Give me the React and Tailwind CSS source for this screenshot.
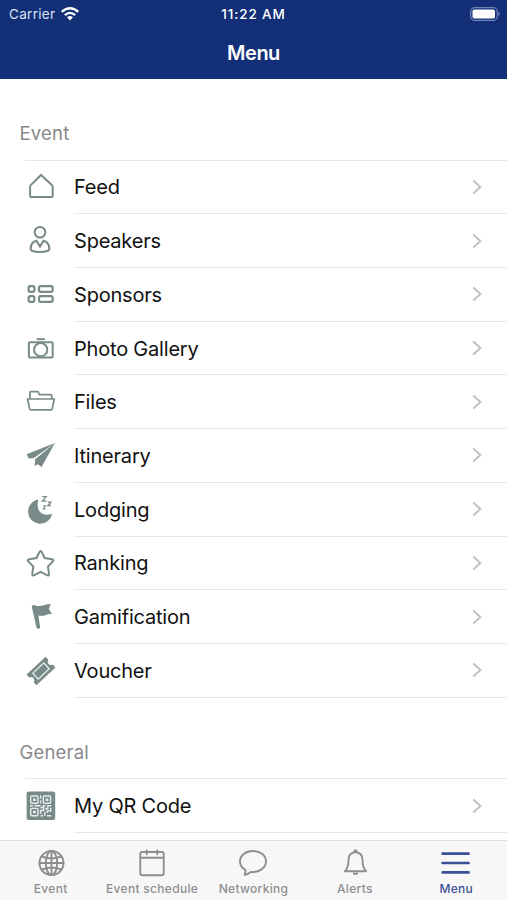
import React, { useState } from "react";

const HouseIcon = () => (
  <path
    d="M17 4 7 13.900c-.600.600-.900 1-.900 1.900V24.900a1.200 1.200 0 0 0 1.200 1.200h20.200a1.200 1.200 0 0 0 1.200-1.200v-9.100c0-.900-.300-1.300-.900-1.900Z"
    fill="none"
  />
);

const PersonIcon = () => (
  <g fill="none">
    <circle cx="16" cy="7.200" r="5.300" />
    <path d="M12.400 15.800C8.500 17 6.600 20.200 6.600 24c0 1.900 4.600 3 9.300 3s9.500-1.100 9.500-3c0-3.800-1.900-7-5.900-8.200L16 21.500Z" />
  </g>
);

const SponsorsIcon = () => (
  <g fill="none" strokeWidth="2.200">
    <rect x="4.600" y="7.200" width="5.800" height="5.600" rx="1.800" />
    <rect x="15" y="7.200" width="13.700" height="5.600" rx="1.800" />
    <rect x="4.600" y="17.100" width="5.800" height="5.800" rx="1.800" />
    <rect x="15" y="17.100" width="13.700" height="5.800" rx="1.800" />
  </g>
);

const CameraIcon = () => (
  <g fill="none">
    <rect x="4.900" y="9.200" width="23.800" height="15.200" rx="1" />
    <circle cx="16.700" cy="16.700" r="6.600" />
    <path d="M12.700 6.200h8.300" />
  </g>
);

const FolderIcon = () => (
  <g fill="none" strokeWidth="1.700">
    <path d="M6 13V6.500q0-.800.800-.800h6.600q.700 0 1.100.800l.900 2.200H26.800q1 0 1 1V13" />
    <path d="M3.600 13h26.600l-1.900 9.700q-.200 1.200-1.400 1.200H7q-1.200 0-1.400-1.200Z" />
  </g>
);

const PlaneIcon = () => (
  <g stroke="none">
    <path d="M30.900 3.100 2.600 14.300l2.100 4.300 5.200-.700Z" />
    <path d="m30.900 3.100-19.700 16.100-.7 7 3.200-2 3.900 2.700Z" />
  </g>
);

const MoonIcon = () => (
  <g>
    <path
      stroke="none"
      d="M14.500 5.600A12.100 12.100 0 1 0 28.200 19.400C22.500 22.500 14.600 20 13.800 13c-.300-3 .0-5.300.7-7.400Z"
    />
    <g fill="none" strokeWidth="1.300">
      <path d="M18.200 2.600h4l-3.900 4.600h4.200" />
      <path d="M23.800 8.200h3l-2.900 3.300h3.100" />
      <path d="M19.300 11.700h2.100l-2.100 3.200h2.100" strokeWidth="1.100" />
    </g>
  </g>
);

const StarIcon = () => (
  <path
    fill="none"
    d="M15.300 5.200q1.300-2.200 2.600 0l2.800 5.800 7.200 1.200q2.500.500 1 2.200l-5 5.200 1.100 7q.2 2.700-2 1.600l-6.400-3.300-6.300 3.300q-2.300 1.100-2-1.400l1-7.200-5-5.200q-1.600-1.800.9-2.200l7.300-1.200Z"
  />
);

const FlagIcon = () => (
  <path
    stroke="none"
    d="M7.700 5.500q0-1 1-1.200l1.900-.3 1 .8q5.500.800 9-.900 2.700-.900 6.200-.900l-2 5 3.200 5q-3-.400-6 .900-3.400 1.300-7.600.7l1.700 11.700q.2 1.400-1.600 1.500-1.700 0-2-1.300Z"
  />
);

const TicketIcon = () => (
  <g transform="translate(17 16) rotate(-43)">
    <path
      stroke="none"
      d="M-13-7.200H13v3.900a3.400 3.400 0 0 0 0 6.600v3.900H-13V3.300a3.400 3.400 0 0 0 0-6.600Z"
    />
    <rect x="-7.500" y="-4" width="15" height="8" fill="none" stroke="#eef3f2" strokeWidth="1.200" />
  </g>
);

const QrIcon = () => (
  <g>
    <rect x="2.600" y="1.400" width="28.600" height="28.600" rx="2" stroke="none" />
    <g fill="none" stroke="#e6eceb" strokeWidth="1.400">
      <rect x="6.700" y="6" width="7.300" height="7.300" rx="1.200" />
      <rect x="19.300" y="6" width="7.300" height="7.300" rx="1.200" />
      <rect x="6.700" y="18.400" width="7.300" height="7.300" rx="1.200" />
      <path d="M9 9.700h2.800M21.600 9.700h2.800M9 22h2.800" strokeWidth="2.400" />
      <path d="M16.600 5.300v3.500M16.600 10.500v3M6 15.800h3M10.500 15.800h6M18.500 15.800h3M23 15.800h4.300M16.600 17.500h3v3h-3v3.500M16.600 25.700h2.400M21.300 18.800h2.500v-2M26.700 18v3h-3.500v2M20.800 22v4M23 25.700h4.300" />
    </g>
  </g>
);

const sections = [
  {
    title: "Event",
    items: [
      { label: "Feed", icon: HouseIcon },
      { label: "Speakers", icon: PersonIcon },
      { label: "Sponsors", icon: SponsorsIcon },
      { label: "Photo Gallery", icon: CameraIcon },
      { label: "Files", icon: FolderIcon },
      { label: "Itinerary", icon: PlaneIcon },
      { label: "Lodging", icon: MoonIcon },
      { label: "Ranking", icon: StarIcon },
      { label: "Gamification", icon: FlagIcon },
      { label: "Voucher", icon: TicketIcon },
    ],
  },
  {
    title: "General",
    items: [
      { label: "My QR Code", icon: QrIcon },
    ],
  },
];

const GlobeTab = () => (
  <g>
    <circle cx="16.500" cy="16" r="12" />
    <ellipse cx="16.500" cy="16" rx="5.700" ry="12" />
    <path d="M16.500 4v24M4.500 16h24M7 9.500q9.500 4 19 0M7 22.500q9.500-4 19 0" />
  </g>
);

const CalendarTab = () => (
  <g>
    <rect x="4.300" y="5" width="23.400" height="23.300" rx="2" />
    <path d="M4.300 10.800h23.400M10.800 3.500v3.800M21.200 3.500v3.800" />
  </g>
);

const ChatTab = () => (
  <path d="M16 4C8.500 4 3 8.700 3 14.500c0 3.600 2.100 6.500 5.300 8.400.5 2 .1 3.300-.7 5 2.600-.3 4.600-1.300 6.300-3 8.300.7 15.100-4 15.100-10.400C29 8.700 23.500 4 16 4Z" />
);

const BellTab = () => (
  <g>
    <path d="M16.500 5c4.400.500 7 3.500 7 7.800 0 5.500.9 8.700 3.600 11.400H5.900C8.600 21.500 9.500 18.300 9.500 12.800c0-4.300 2.600-7.300 7-7.800Z" />
    <path d="M15.300 4.600a1.200 1.200 0 0 1 2.400 0" />
    <path d="M14.900 26.400q1.600 1.200 3.200 0" strokeWidth="2" />
  </g>
);

const MenuTab = () => (
  <path d="M2.600 6.600h26M2.600 16h26M2.600 25.400h26" strokeWidth="2.600" />
);

const tabs = [
  { label: "Event", icon: GlobeTab },
  { label: "Event schedule", icon: CalendarTab },
  { label: "Networking", icon: ChatTab },
  { label: "Alerts", icon: BellTab },
  { label: "Menu", icon: MenuTab },
];

const StatusBar = () => (
  <div className="grid h-[28px] grid-cols-3 items-center pl-[9px] pr-[6px] text-[13.500px] text-white">
    <div className="flex items-center gap-[5px]">
      <span className="tracking-[0.300px] text-[#dce3f3]">Carrier</span>
      <svg className="-mt-[1px]" width="20" height="14" viewBox="0 0 19 14" fill="none" stroke="#fff" strokeWidth="2.300">
        <path d="M1.200 4.900q8.300-7.400 16.600 0M4.300 8.100q5.200-4.500 10.400 0" />
        <path d="M6.500 10.300q3-2.500 6 0l-3 3.200Z" fill="#fff" stroke="none" />
      </svg>
    </div>
    <div className="-ml-[3px] whitespace-nowrap text-center font-medium tracking-[0.900px]">11:22 AM</div>
    <div className="flex justify-end">
      <svg className="-mt-[1px]" width="31" height="14" viewBox="0 0 31 14">
        <rect x="0.700" y="0.700" width="26.600" height="12.600" rx="3.800" fill="none" stroke="#7083b5" strokeWidth="1.200" />
        <rect x="2.500" y="2.500" width="22.500" height="9" rx="1.800" fill="#fff" />
        <path d="M28.500 4.800q2.500 2.200 0 4.400Z" fill="#8493bf" />
      </svg>
    </div>
  </div>
);

const MenuRow = ({ label, icon: Icon }) => (
  <button className="flex h-[53.720px] w-full shrink-0 items-center pl-6 text-left">
    <svg
      className="mr-[18px] shrink-0 fill-[#788b88] stroke-[#788b88]"
      width="32"
      height="32"
      viewBox="0 0 32 32"
      strokeWidth="2"
    >
      <Icon />
    </svg>
    <span className="flex h-full flex-1 items-center justify-between border-b border-[#e8e8e9] pr-[24px]">
      <span className="pt-[1px] text-[20px] tracking-[-0.200px] text-[#111]">{label}</span>
      <svg width="12" height="16" viewBox="0 0 12 16" fill="none" stroke="#c2c2c5" strokeWidth="2.100">
        <path d="m2.300 1.500 7 6.500-7 6.500" />
      </svg>
    </span>
  </button>
);

const App = () => {
  const [activeTab, setActiveTab] = useState("Menu");

  return (
    <div className="flex h-[900px] w-[507px] flex-col overflow-hidden bg-white font-['Inter','Liberation_Sans',sans-serif]">
      <header className="h-[79px] shrink-0 bg-[#132f78]">
        <StatusBar />
        <h1 className="flex h-[49px] items-center justify-center text-[20px] font-semibold tracking-[-0.500px] text-white">
          Menu
        </h1>
      </header>

      <main className="min-h-0 flex-1 overflow-hidden">
        {sections.map((section) => (
          <section key={section.title}>
            <div className="flex h-[81.500px] flex-col">
              <h2 className="flex-1 pl-[19.500px] pt-[41px] text-[18.500px] leading-[26px] tracking-[0.200px] text-[#88888b]">
                {section.title}
              </h2>
              <div className="ml-[25px] border-b border-[#e8e8e9]" />
            </div>
            {section.items.map((item) => (
              <MenuRow key={item.label} label={item.label} icon={item.icon} />
            ))}
          </section>
        ))}
      </main>

      <nav className="grid h-[60.500px] shrink-0 grid-cols-5 border-t border-[#dedede] bg-[#f7f7f7]">
        {tabs.map(({ label, icon: Icon }) => (
          <button
            key={label}
            onClick={() => setActiveTab(label)}
            className={`flex flex-col items-center pt-[6.500px] ${
              activeTab === label ? "text-[#3b5096]" : "text-[#8e8e90]"
            }`}
          >
            <svg width="32" height="32" viewBox="0 0 32 32" fill="none" stroke="currentColor" strokeWidth="1.900" strokeLinecap="round" strokeLinejoin="round">
              <Icon />
            </svg>
            <span className="mt-[0.500px] whitespace-nowrap text-[12px] font-medium leading-[18px] tracking-[0.300px]">
              {label}
            </span>
          </button>
        ))}
      </nav>
    </div>
  );
};

export default App;
